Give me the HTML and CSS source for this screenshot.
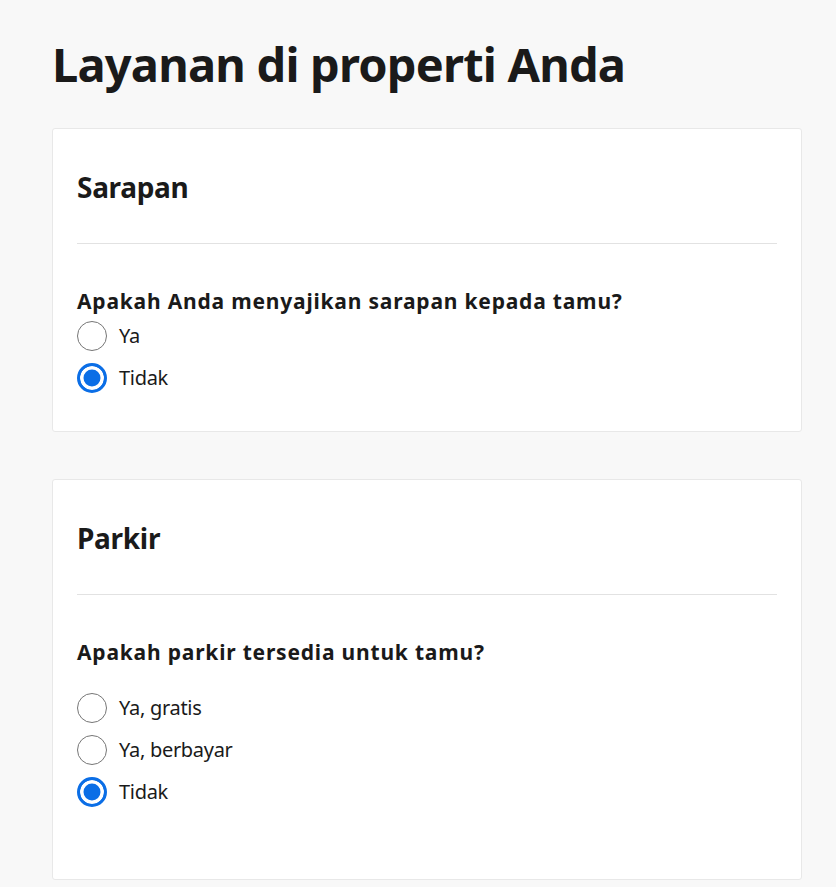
FILE: index.html
```html
<!DOCTYPE html>
<html lang="id">
<head>
<meta charset="utf-8">
<title>Layanan di properti Anda</title>
<link rel="stylesheet" href="styles.css">
</head>
<body>
<main class="page">
  <h1 class="page-title">Layanan di properti Anda</h1>

  <section class="card">
    <h2 class="card-title">Sarapan</h2>
    <hr class="divider">
    <fieldset class="question">
      <legend class="question-label">Apakah Anda menyajikan sarapan kepada tamu?</legend>
      <div class="options">
        <label class="option"><input type="radio" name="breakfast" class="radio"><span>Ya</span></label>
        <label class="option"><input type="radio" name="breakfast" class="radio" checked><span>Tidak</span></label>
      </div>
    </fieldset>
  </section>

  <section class="card card-parking">
    <h2 class="card-title">Parkir</h2>
    <hr class="divider">
    <fieldset class="question">
      <legend class="question-label">Apakah parkir tersedia untuk tamu?</legend>
      <div class="options options-spaced">
        <label class="option"><input type="radio" name="parking" class="radio"><span>Ya, gratis</span></label>
        <label class="option"><input type="radio" name="parking" class="radio"><span>Ya, berbayar</span></label>
        <label class="option"><input type="radio" name="parking" class="radio" checked><span>Tidak</span></label>
      </div>
    </fieldset>
  </section>
</main>
</body>
</html>
```
FILE: styles.css
```css
html, body {
  margin: 0;
  padding: 0;
  background: #f8f8f8;
}

body {
  font-family: "Noto Sans", "Open Sans", sans-serif;
  color: #1a1a1a;
}

.page {
  padding: 36px 34px 40px 52px;
  display: flex;
  flex-direction: column;
  gap: 47px;
}

.page-title {
  margin: 0 0 -11px 0;
  font-size: 47px;
  line-height: 56px;
  font-weight: 700;
  letter-spacing: -0.8px;
}

.card {
  width: 750px;
  box-sizing: border-box;
  background: #fff;
  border: 1px solid #e8e8e8;
  border-radius: 3px;
  padding: 40px 24px 32px 24px;
}

.card-title {
  margin: 0;
  font-size: 28px;
  line-height: 36px;
  font-weight: 700;
  letter-spacing: -0.3px;
}

.divider {
  margin: 38px 0 43px 0;
  border: 0;
  border-top: 1px solid #e2e2e2;
  height: 0;
}

.question {
  margin: 0;
  padding: 0;
  border: 0;
  min-width: 0;
}

.question-label {
  padding: 0;
  font-size: 21px;
  line-height: 28px;
  font-weight: 700;
  letter-spacing: 0.8px;
}

.options {
  display: flex;
  flex-direction: column;
}

.options-spaced {
  margin: 21px 0 34px 0;
}

.option {
  display: flex;
  align-items: center;
  gap: 12px;
  height: 42px;
  font-size: 20px;
  line-height: 28px;
  letter-spacing: -0.3px;
  cursor: pointer;
}

.radio {
  appearance: none;
  -webkit-appearance: none;
  margin: 0;
  width: 30px;
  height: 30px;
  flex: 0 0 30px;
  border-radius: 50%;
  border: 1px solid #767676;
  background: #fff;
  box-sizing: border-box;
}

.radio:checked {
  border: 3.5px solid #0b6ee6;
  background: #0b6ee6;
  box-shadow: inset 0 0 0 3.5px #fff;
}
```
